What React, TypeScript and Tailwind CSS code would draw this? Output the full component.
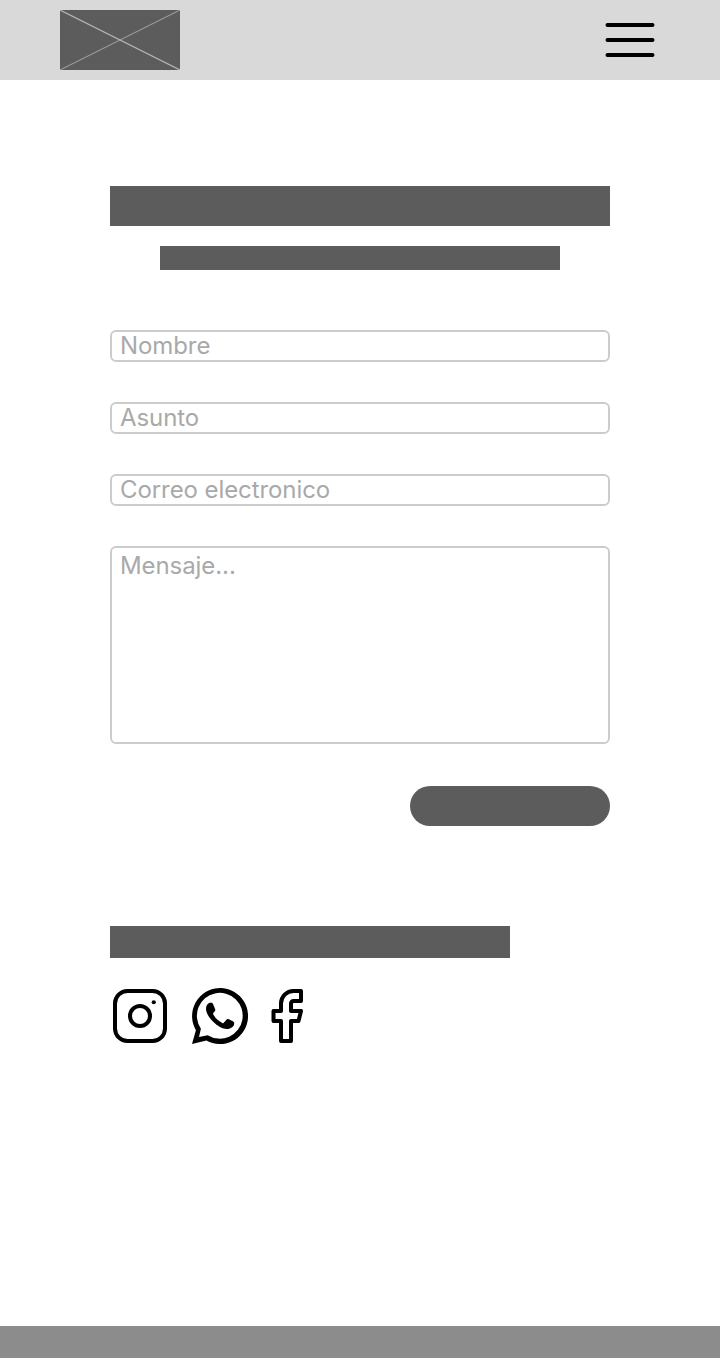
const fieldClass =
  "block w-full rounded-md border-2 border-[#cccccc] bg-white px-2 font-['Inter',sans-serif] text-2xl font-normal tracking-[-0.08px] text-[#5c5c5c] placeholder:text-[#a9a9a9] outline-none";

function Header() {
  return (
    <header className="flex h-20 items-center justify-between bg-[#d9d9d9] px-[60px]">
      <svg className="h-[60px] w-[120px] bg-[#5c5c5c]" viewBox="0 0 120 60" fill="none" aria-hidden="true">
        <path d="M0 0L120 60" stroke="#b3b3b3" strokeWidth="1.2" />
        <path d="M120 0L0 60" stroke="#a6a6a6" strokeWidth="1" />
      </svg>
      <button type="button" aria-label="Menu">
        <svg className="h-[60px] w-[60px]" viewBox="0 0 60 60" fill="none" aria-hidden="true">
          <path d="M7.5 15H52.5M7.5 30H52.5M7.5 45H52.5" stroke="black" strokeWidth="4" strokeLinecap="round" />
        </svg>
      </button>
    </header>
  );
}

function InstagramIcon() {
  return (
    <svg className="h-[60px] w-[60px]" viewBox="0 0 60 60" fill="none" aria-hidden="true">
      <rect x="5" y="5" width="50" height="50" rx="12.5" stroke="black" strokeWidth="4" />
      <circle cx="30" cy="30" r="10" stroke="black" strokeWidth="4" />
      <circle cx="43.75" cy="16.25" r="2.1" fill="black" />
    </svg>
  );
}

function WhatsAppIcon() {
  return (
    <svg className="h-[60px] w-[60px]" viewBox="0 0 60 60" aria-hidden="true">
      <path
        fillRule="evenodd"
        d="M2 58L5.9 44.2A28 28 0 1 1 16.4 54.5ZM9 51L17.7 49.2A22.9 22.9 0 1 0 10.9 42.7Z"
      />
      <path d="M21 16.8C19.8 16.7 18.6 17.2 17.8 18.1C16.3 19.8 15.8 21.8 16.1 24.1C16.7 28.4 19.6 32.2 23.2 35.8C27.6 40 32.1 42.9 37 43C39.9 43 43.2 41.3 44 38.7C44.3 37.7 44.3 36.5 43.9 36.1C43.2 35.4 39.4 33.5 38.1 33.1C37.3 32.9 36.8 33.2 36.2 33.9L34 36.6C33.5 37.2 33 37.3 32.3 36.9C28.6 35.2 25.5 32.3 23.3 28.6C22.9 27.9 23 27.4 23.5 26.8L25 24.9C25.4 24.4 25.4 23.9 25.2 23.3L23 18C22.6 17.1 22.2 16.8 21 16.8Z" />
    </svg>
  );
}

function FacebookIcon() {
  return (
    <svg className="h-[60px] w-[60px]" viewBox="0 0 24 24" fill="none" aria-hidden="true">
      <path
        d="M18 2h-3a5 5 0 0 0-5 5v3H7v4h3v8h4v-8h3l1-4h-4V7a1 1 0 0 1 1-1h3z"
        stroke="black"
        strokeWidth="1.6"
        strokeLinecap="round"
        strokeLinejoin="round"
      />
    </svg>
  );
}

export default function App() {
  return (
    <div className="flex h-[1358px] w-[720px] flex-col bg-white font-['Inter',sans-serif]">
      <Header />
      <main className="flex grow flex-col px-[110px] pt-[106px]">
        <div className="h-10 bg-[#5c5c5c]" />
        <div className="mt-5 h-6 w-[400px] self-center bg-[#5c5c5c]" />

        <form className="mt-[60px] flex flex-col">
          <div className="flex flex-col gap-10">
            <input className={`${fieldClass} h-8 pb-0.5 leading-6`} placeholder="Nombre" />
            <input className={`${fieldClass} h-8 pb-0.5 leading-6`} placeholder="Asunto" />
            <input className={`${fieldClass} h-8 pb-0.5 leading-6`} placeholder="Correo electronico" />
            <textarea className={`${fieldClass} h-[198px] resize-none py-1 leading-7`} placeholder="Mensaje..." />
          </div>
          <button type="button" aria-label="Enviar" className="mt-[42px] h-10 w-[200px] self-end rounded-full bg-[#5c5c5c]" />
        </form>

        <div className="mt-[100px] h-8 w-[400px] bg-[#5c5c5c]" />
        <div className="mt-7 flex">
          <a className="mr-5"><InstagramIcon /></a>
          <a className="mr-1.5"><WhatsAppIcon /></a>
          <a><FacebookIcon /></a>
        </div>
      </main>
      <footer className="h-8 bg-[#8c8c8c]" />
    </div>
  );
}
